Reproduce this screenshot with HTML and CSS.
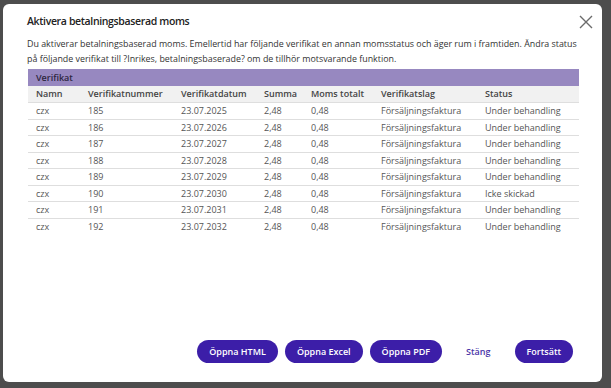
FILE: index.html
```html
<!DOCTYPE html>
<html lang="sv">
<head>
<meta charset="utf-8">
<title>Aktivera betalningsbaserad moms</title>
<link rel="stylesheet" href="styles.css">
</head>
<body>
<div class="modal">
  <button class="close" aria-label="Stäng">
    <svg width="14" height="14" viewBox="0 0 14 14"><path d="M1 1 L13 13 M13 1 L1 13" stroke="#6b6b6b" stroke-width="1.4" fill="none"/></svg>
  </button>
  <h1 class="title">Aktivera betalningsbaserad moms</h1>
  <p class="text">Du aktiverar betalningsbaserad moms. Emellertid har följande verifikat en annan momsstatus och äger rum i framtiden. Ändra status på följande verifikat till ?Inrikes, betalningsbaserade? om de tillhör motsvarande funktion.</p>
  <div class="table">
    <div class="caption">Verifikat</div>
    <div class="row head">
      <span>Namn</span><span>Verifikatnummer</span><span>Verifikatdatum</span><span>Summa</span><span>Moms totalt</span><span>Verifikatslag</span><span>Status</span>
    </div>
    <div class="row"><span>czx</span><span>185</span><span>23.07.2025</span><span>2,48</span><span>0,48</span><span>Försäljningsfaktura</span><span>Under behandling</span></div>
    <div class="row"><span>czx</span><span>186</span><span>23.07.2026</span><span>2,48</span><span>0,48</span><span>Försäljningsfaktura</span><span>Under behandling</span></div>
    <div class="row"><span>czx</span><span>187</span><span>23.07.2027</span><span>2,48</span><span>0,48</span><span>Försäljningsfaktura</span><span>Under behandling</span></div>
    <div class="row"><span>czx</span><span>188</span><span>23.07.2028</span><span>2,48</span><span>0,48</span><span>Försäljningsfaktura</span><span>Under behandling</span></div>
    <div class="row"><span>czx</span><span>189</span><span>23.07.2029</span><span>2,48</span><span>0,48</span><span>Försäljningsfaktura</span><span>Under behandling</span></div>
    <div class="row"><span>czx</span><span>190</span><span>23.07.2030</span><span>2,48</span><span>0,48</span><span>Försäljningsfaktura</span><span>Icke skickad</span></div>
    <div class="row"><span>czx</span><span>191</span><span>23.07.2031</span><span>2,48</span><span>0,48</span><span>Försäljningsfaktura</span><span>Under behandling</span></div>
    <div class="row last"><span>czx</span><span>192</span><span>23.07.2032</span><span>2,48</span><span>0,48</span><span>Försäljningsfaktura</span><span>Under behandling</span></div>
  </div>
  <div class="spacer"></div>
  <div class="actions">
    <button class="btn">Öppna HTML</button>
    <button class="btn">Öppna Excel</button>
    <button class="btn">Öppna PDF</button>
    <button class="link">Stäng</button>
    <button class="btn">Fortsätt</button>
  </div>
</div>
</body>
</html>
```

FILE: styles.css
```css
* { box-sizing: border-box; }
html, body { margin: 0; padding: 0; }
body {
  background: #4d4d4d;
  width: 611px;
  height: 388px;
  overflow: hidden;
  font-family: "Open Sans", "Noto Sans", "DejaVu Sans", sans-serif;
  color: #333;
}
.modal {
  position: relative;
  margin: 4px 0 0 3px;
  width: 599px;
  height: 378px;
  background: #fff;
  border-radius: 6px;
  padding: 9px 23px 19px 24px;
  display: flex;
  flex-direction: column;
}
.close {
  position: absolute;
  top: 11px;
  right: 9px;
  background: none;
  border: 0;
  padding: 0;
  width: 14px;
  height: 14px;
  cursor: pointer;
}
.close svg { display: block; }
.title {
  margin: 0;
  font-size: 10.5px;
  font-weight: 600;
  letter-spacing: -0.35px;
  line-height: 16px;
  color: #222;
}
.text {
  margin: 7px -6px 0 0;
  font-size: 8.9px;
  line-height: 15px;
  color: #333;
}
.table {
  margin: 3px 0 0 1px;
  font-size: 9px;
}
.caption {
  background: #9788c0;
  height: 17px;
  line-height: 17px;
  padding-left: 8px;
  font-weight: 600;
  color: #2d2640;
}
.row {
  display: grid;
  grid-template-columns: 52px 93px 83px 47px 70px 104px 1fr;
  height: 16.5px;
  line-height: 16px;
  padding-left: 8px;
  border-bottom: 1px solid #dedede;
  color: #555;
}
.row.last { border-bottom: 0; }
.row.head {
  background: #f1f1f1;
  height: 17px;
  font-weight: 600;
  color: #444;
}
.row span { white-space: nowrap; }
.spacer { flex: 1; }
.actions {
  display: flex;
  justify-content: flex-end;
  align-items: center;
  gap: 7px;
  padding-right: 6px;
}
.btn {
  background: #3c1ea8;
  color: #fff;
  border: 0;
  border-radius: 12px;
  height: 23px;
  padding: 0 12px;
  font-family: inherit;
  font-size: 9px;
  font-weight: 600;
  cursor: pointer;
}
.link {
  background: none;
  border: 0;
  color: #4a35a8;
  font-family: inherit;
  font-size: 9px;
  font-weight: 600;
  padding: 0 17px 0 17px;
  cursor: pointer;
}
```
